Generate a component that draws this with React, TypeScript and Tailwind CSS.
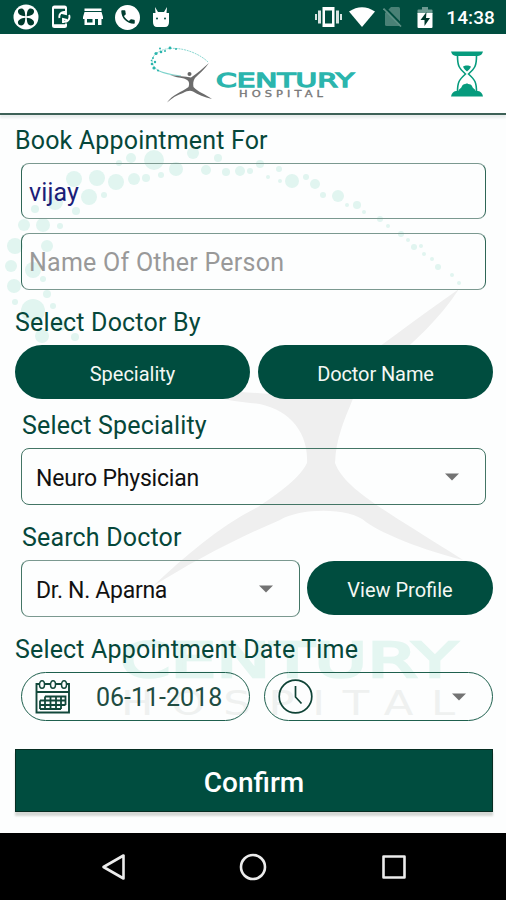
import React from "react";
import { MdPhone } from "react-icons/md";

// [cx, cy, r]
const DOTS = [
  [154, 160, 10], [193, 153, 6], [176, 169, 7], [206, 170, 5], [226, 172, 4], [240, 171, 5],
  [131, 158, 5], [134, 179, 6], [116, 182, 8], [97, 178, 8], [74, 179, 8], [89, 197, 8],
  [104, 195, 3], [161, 175, 3], [146, 178, 4], [55, 202, 8], [35, 209, 4], [76, 211, 4],
  [24, 225, 6], [43, 225, 7], [60, 226, 3], [15, 246, 8], [47, 246, 6], [33, 270, 8],
  [11, 266, 6], [14, 286, 7], [47, 294, 4], [43, 279, 3], [33, 311, 12], [15, 302, 3],
  [42, 336, 7], [75, 337, 4], [53, 306, 3], [60, 325, 6], [218, 158, 4], [119, 163, 3],
  [292, 181, 7], [315, 184, 5], [306, 177, 3], [338, 196, 6], [323, 195, 3], [357, 205, 4],
  [347, 205, 2], [279, 169, 3], [260, 164, 4], [268, 177, 2], [280, 181, 2], [364, 212, 2],
  [380, 219, 3], [388, 226, 2], [401, 234, 3], [408, 240, 2], [414, 247, 3], [421, 246, 2],
  [424, 254, 2], [432, 259, 2], [438, 267, 3], [452, 275, 2], [459, 283, 2], [250, 171, 3],
];

const LOGO_DOTS = [
  [170, 47, 1.4], [165, 50, 1], [161, 51, 1.3], [156, 52.5, 1.6], [153, 57, 1], [155, 61, 1.2],
  [152, 63, 1.3], [154, 67, 1.6], [158, 69.5, 1], [160, 47.5, 1], [176, 48, 1], [151.5, 59.5, 0.8],
];

function Watermark() {
  return (
    <svg className="absolute inset-0 h-full w-full" viewBox="0 115 506 718">
      <g fill="#e1f5f0">
        {DOTS.map(([x, y, r], i) => (
          <circle key={i} cx={x} cy={y} r={r} />
        ))}
      </g>
      <path
        fill="#efefef"
        d="M459 289C440 318 415 342 385 366C368 380 356 390 352 401C344 421 336 438 335 463C345 490 388 512 463 560C420 549 385 535 366 522C350 507 300 508 280 520C235 539 190 563 152 587C185 556 220 526 258 507C280 492 300 478 307 463C309 430 285 405 250 403C230 401 205 396 190 388C220 392 270 392 300 398C345 375 400 330 459 289Z"
      />
      <text x="120" y="677" fill="#e4f6f1" stroke="#e4f6f1" strokeWidth="2.500" fontFamily="DejaVu Sans" fontSize="48" textLength="337" lengthAdjust="spacingAndGlyphs">CENTURY</text>
      <text x="121" y="715" fill="#eff1f0" fontFamily="DejaVu Sans" fontSize="34" letterSpacing="14" textLength="352" lengthAdjust="spacingAndGlyphs">HOSPITAL</text>
    </svg>
  );
}

function Logo() {
  return (
    <svg width="210" height="62" viewBox="147 42 210 62">
      <path d="M159 70C148 63 150 52 166 48C182 45 200 53 208 61" fill="none" stroke="#7fd3cc" strokeWidth="0.9" strokeDasharray="2 0.8" />
      <path d="M157 69C163 72 172 74 181 75" fill="none" stroke="#7fd3cc" strokeWidth="1.1" />
      <g fill="#2bb5ad">
        {LOGO_DOTS.map(([x, y, r], i) => (
          <circle key={i} cx={x} cy={y} r={r} />
        ))}
      </g>
      <path fill="#6c6c6c" d="M209 62C205 68 199 73 195 77C193 80 193 83 193.500 86C198 91 205 93 212 98C204 96 198 94 193 90.500C190 89 187 90 183 92C177 94 172 97 167 101.500C172 94 182 91 188.500 86C190 82 189 79 184 77.500C179 76.500 175 76 170 74C177 75 185 75.500 191 76.500C198 72 203 67 209 62Z" />
      <circle cx="189.500" cy="73" r="2" fill="#666" />
      <text x="216" y="85.500" fill="#2bb5ad" stroke="#2bb5ad" strokeWidth="1.300" fontFamily="DejaVu Sans" fontSize="20" textLength="138" lengthAdjust="spacingAndGlyphs">CENTURY</text>
      <text x="239" y="95.500" fill="#777" stroke="#777" strokeWidth="0.300" fontFamily="DejaVu Sans" fontSize="8.500" letterSpacing="3" textLength="88" lengthAdjust="spacingAndGlyphs">HOSPITAL</text>
    </svg>
  );
}

function Hourglass() {
  return (
    <svg width="32" height="46" viewBox="0 0 32 46" fill="#069b7d">
      <path d="M0 .5H32Q31 4.500 27 5H5Q1 4.500 0 .5ZM0 45.500Q1 40.500 5 40H27Q31 40.500 32 45.500Z" />
      <path d="M6.500 5C6.500 15 8 17 14.500 23C8 29 6.500 31 6.500 41M25.500 5C25.500 15 24 17 17.500 23C24 29 25.500 31 25.500 41" fill="none" stroke="#069b7d" strokeWidth="1.600" />
      <path d="M12 15.500C14 14 18 14 20 15.500C19 18 17.500 19 16 20.500C14.500 19 13 18 12 15.500ZM7 41C8 37 10 38 11 35C13 32 15 34 16 32C17 34 19 32 21 35C22 38 24 37 25 41Z" />
    </svg>
  );
}

function CalendarIcon() {
  return (
    <svg width="36" height="36" viewBox="0 0 36 36" fill="none" stroke="#12483b" strokeWidth="1.500">
      <path d="M4 5H1.500V33.500H34V5H32M10 5H15M21 5H26M1.500 13H34" strokeWidth="1.900" />
      <ellipse cx="7" cy="5.500" rx="2.500" ry="3.800" />
      <ellipse cx="18" cy="5.500" rx="2.500" ry="3.800" />
      <ellipse cx="29" cy="5.500" rx="2.500" ry="3.800" />
      <path d="M10 17.500H30.500V26M5 21.500H30.500M5 26H30.500M5 30H26M5 21.500V30M10 17.500V30M15.500 17.500V30M21 17.500V30M26 17.500V30" strokeWidth="1.800" />
    </svg>
  );
}

function Caret() {
  return (
    <svg width="14" height="8" viewBox="0 0 14 8" fill="#737373">
      <path d="M0 .5H14L7 7.500Z" />
    </svg>
  );
}

function StatusBar() {
  return (
    <div className="flex h-[34px] shrink-0 items-center bg-[#004d3f] pr-[11px] pl-[13px] text-white">
      <svg width="26" height="26" viewBox="0 0 26 26">
        <circle cx="13" cy="13" r="12.500" fill="#fff" />
        <g fill="#003a2c">
          <path d="M12.300 12.300C8 12 4.500 10 5 7C5 5 8 4 10 5C12 6.500 12 9 12.300 12.300Z" />
          <path d="M13.700 12.300C18 12 21.500 10 21 7C21 5 18 4 16 5C14 6.500 14 9 13.700 12.300Z" />
          <path d="M12.300 13.700C8 14 4.500 16 5 19C5 21 8 22 10 21C12 19.500 12 17 12.300 13.700Z" />
          <path d="M13.700 13.700C18 14 21.500 16 21 19C21 21 18 22 16 21C14 19.500 14 17 13.700 13.700Z" />
        </g>
      </svg>
      <svg className="ml-[12px]" width="20" height="24" viewBox="0 0 20 24" fill="none" stroke="#fff">
        <path d="M15 5V3Q15 1.500 13.500 1.500H3.500Q2 1.500 2 3V20.500Q2 22 3.500 22H13.500Q15 22 15 20.500V18.500" strokeWidth="2" />
        <path d="M2 2.500H15M2 20.500H15" strokeWidth="2.500" />
        <path d="M8.500 13A4.800 4.800 0 0 1 14 7M18 10A4.800 4.800 0 0 1 12 16.500M11 8L15 9V5M16 15L12 14V18" strokeWidth="1.900" />
      </svg>
      <svg className="ml-[12px]" width="20" height="18" viewBox="0 0 20 18" fill="#fff">
        <path d="M1.500 .5H18.500V3H1.500ZM1.500 4H18.500L20 9V11H18.500V17H15V11H12V17H1.500V11H0V9ZM4 11V14.500H9.500V11Z" fillRule="evenodd" />
      </svg>
      <div className="ml-[12px] flex size-[25px] items-center justify-center rounded-full bg-white text-[#003d2f]">
        <MdPhone size={18} />
      </div>
      <svg className="ml-[12px]" width="18" height="21" viewBox="0 0 18 21" fill="#fff">
        <path d="M1 6H3.500L3 0L6 5H12L15 0L14.500 6H17V15Q17 20 13 20H5Q1 20 1 15Z" />
        <circle cx="5" cy="11.500" r="1" fill="#004d3f" />
        <circle cx="13" cy="11.500" r="1" fill="#004d3f" />
      </svg>

      <svg className="ml-auto" width="27" height="20" viewBox="0 0 27 20" fill="#fff">
        <path d="M7.500 0H19.500V20H7.500ZM10 3.500V16.500H17V3.500Z" fillRule="evenodd" />
        <path d="M3 3.500H6V16.500H3ZM21 3.500H24V16.500H21ZM0 7H2V13H0ZM25 7H27V13H25Z" opacity=".85" />
      </svg>
      <svg className="ml-[7px]" width="26" height="20" viewBox="0 0 26 20" fill="#fff">
        <path d="M0 4.500Q13-4 26 4.500L13 20Z" />
      </svg>
      <svg className="ml-[8px]" width="20" height="20" viewBox="0 0 20 20">
        <path d="M8 0H15.500Q17 0 17 1.500V19H3.500Q2 19 2 17.500V6Z" fill="#4a8176" />
        <path d="M2 .5L19.500 18.500" stroke="#004d3f" strokeWidth="2" />
        <path d="M.5 1.500L18 19.500" stroke="#5d9085" strokeWidth="1.700" />
      </svg>
      <svg className="ml-[14px]" width="16" height="21" viewBox="0 0 16 21">
        <path d="M5 0H11V2.500H14.500Q15.500 2.500 15.500 3.500V7H.5V3.500Q.5 2.500 1.500 2.500H5Z" fill="#6d9a91" />
        <path d="M.5 6H15.500V20Q15.500 21 14.500 21H1.500Q.5 21 .5 20Z" fill="#fff" />
        <path d="M9.500 5L3.500 13H7.500V19L13 11H9Z" fill="#00382c" />
      </svg>
      <span className="ml-[13px] pt-[3px] text-[19px] font-medium tracking-[0.1px]">14:38</span>
    </div>
  );
}

function Label({ children, className = "" }: { children: React.ReactNode; className?: string }) {
  return (
    <div className={`mb-[7px] h-[30px] text-[25px] leading-[30px] tracking-[0.17px] whitespace-nowrap text-[#06473a] ${className}`}>
      {children}
    </div>
  );
}

export default function App() {
  return (
    <div className="flex h-[900px] w-[506px] flex-col overflow-hidden bg-[#fdfefe] font-['Roboto',sans-serif]">
      <StatusBar />
      <header className="relative flex h-[81px] shrink-0 items-center border-b-2 border-[#3d6157] bg-white pr-[23px] pl-[147px] shadow-[0_3px_2px_#e9eded]">
        <Logo />
        <div className="ml-auto">
          <Hourglass />
        </div>
      </header>

      <main className="relative h-[718px] shrink-0">
        <Watermark />
        <div className="relative flex flex-col pt-[11px] pr-[13px] pl-[15px]">
          <Label>Book Appointment For</Label>
          <div className="mr-[7px] ml-[6px] flex h-[56px] items-center rounded-[8px] border border-x-[#2f6656] border-y-[#7b9990] px-[7px] pt-[3px] text-[25px] tracking-[0.1px] text-[#1b2078]">
            vijay
          </div>
          <div className="mt-[14px] mr-[7px] ml-[6px] flex h-[57px] items-center rounded-[8px] border border-x-[#2f6656] border-y-[#7b9990] px-[7px] pt-[3px] text-[25px] tracking-[0.25px] text-[#999]">
            Name Of Other Person
          </div>

          <Label className="mt-[18px]">Select Doctor By</Label>
          <div className="grid grid-cols-2 gap-[8px]">
            <button className="h-[54px] rounded-full bg-[#004d3f] pt-[3px] text-[20px] text-[#f4f8f4]">Speciality</button>
            <button className="h-[54px] rounded-full bg-[#004d3f] pt-[3px] text-[20px] tracking-[-0.1px] text-[#f4f8f4]">Doctor Name</button>
          </div>

          <Label className="mt-[12px] ml-[7px]">Select Speciality</Label>
          <div className="mr-[7px] ml-[6px] flex h-[57px] items-center justify-between rounded-[8px] border border-[#437565] pr-[26px] pl-[14px] text-[23px] tracking-[-0.2px] text-[#111]">
            <span className="pt-[5px]">Neuro Physician</span>
            <Caret />
          </div>

          <Label className="mt-[18px] ml-[7px]">Search Doctor</Label>
          <div className="ml-[6px] flex items-start gap-[7px]">
            <div className="flex h-[57px] w-[279px] items-center justify-between rounded-[8px] border border-x-[#437565] border-y-[#7b9990] pr-[26px] pl-[14px] text-[23px] tracking-[-0.3px] text-[#111]">
              <span className="pt-[5px]">Dr. N. Aparna</span>
              <Caret />
            </div>
            <button className="mt-px h-[54px] flex-1 rounded-full bg-[#004d3f] pt-[3px] text-[20px] text-[#f4f8f4]">View Profile</button>
          </div>

          <Label className="mt-[18px]">Select Appointment Date Time</Label>
          <div className="ml-[6px] flex gap-[14px]">
            <div className="flex h-[49px] w-[229px] items-center rounded-full border border-[#1f604e] pl-[13px] text-[25px] text-[#214c42]">
              <CalendarIcon />
              <span className="ml-[25px] pt-[3px]">06-11-2018</span>
            </div>
            <div className="flex h-[49px] flex-1 items-center justify-between rounded-full border border-[#1f604e] pr-[26px] pl-[13px]">
              <svg width="35" height="35" viewBox="0 0 35 35" fill="none" stroke="#0f4336" strokeWidth="1.700">
                <circle cx="17.500" cy="17.500" r="16.300" />
                <path d="M17.500 7V18L23.500 24.500" />
              </svg>
              <Caret />
            </div>
          </div>

          <button className="mt-[28px] h-[63px] border border-[#062d22] bg-[#004d3f] pt-[4px] text-[28px] font-medium text-white shadow-[0_4px_2px_#d5d8d5]">
            Confirm
          </button>
        </div>
      </main>

      <nav className="flex flex-1 items-center justify-between bg-black pr-[98px] pl-[101px]">
        <svg width="25" height="28" viewBox="0 0 25 28" fill="none" stroke="#ececec" strokeWidth="2.600" strokeLinejoin="round">
          <path d="M22.500 2.500V25.500L2.500 14Z" />
        </svg>
        <svg width="28" height="28" viewBox="0 0 28 28" fill="none" stroke="#ececec" strokeWidth="2.600">
          <circle cx="14" cy="14" r="12" />
        </svg>
        <svg width="28" height="28" viewBox="0 0 28 28" fill="none" stroke="#ececec" strokeWidth="2.600" strokeLinejoin="round">
          <path d="M3.500 3.500H24.500V24.500H3.500Z" />
        </svg>
      </nav>
    </div>
  );
}
